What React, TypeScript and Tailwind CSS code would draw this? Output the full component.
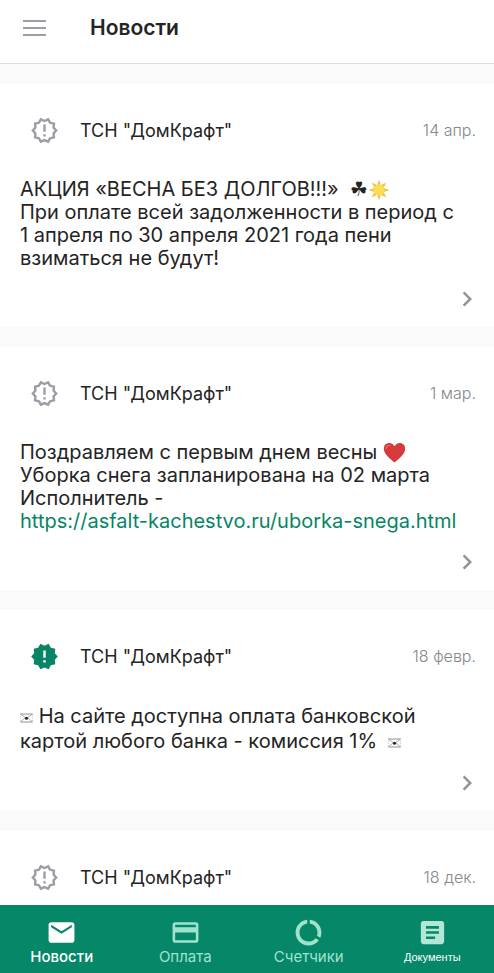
import React from 'react';
import {
    MdArticle,
    MdChevronRight,
    MdDataUsage,
    MdEmail,
    MdNewReleases,
    MdOutlineNewReleases,
    MdPayment
} from 'react-icons/md';

const SunIcon = () => (
    <svg viewBox="0 0 24 24" className="inline-block w-[22px] h-[22px] align-[-5px]" role="img" aria-label="Солнце">
        <path
            d="M12 .5l2 6.200 6-3-3 6 6.500 2.300-6.500 2.300 3 6-6-3-2 6.200-2-6.200-6 3 3-6L.5 12 7 9.700l-3-6 6 3z"
            fill="#edc044"/>
        <circle cx="12" cy="12" r="6.200" fill="#fbdc58"/>
    </svg>
);

const HeartIcon = () => (
    <svg viewBox="0 0 24 22" className="inline-block w-[23px] h-[21px] align-[-4px]" role="img" aria-label="Сердце">
        <path d="M12 21.5C8 18 .8 13 .8 7 .8 3.300 3.400 1 6.500 1 9 1 11 2.400 12 4.500 13 2.400 15 1 17.500 1c3.100 0 5.700 2.300 5.700 6 0 6-7.200 11-11.200 14.500z"
              fill="#d63a3c"/>
        <path d="M3.500 6.500C3.800 4.500 5 3.500 7 3.500" stroke="#e8696a" strokeWidth="1.500" fill="none"
              strokeLinecap="round"/>
    </svg>
);

const LetterIcon = () => (
    <svg viewBox="0 0 13 10" className="inline-block w-[13px] h-[10px]" role="img" aria-label="Письмо">
        <path d="M.5 1h12M.5 9h12" stroke="#777" strokeWidth=".8"/>
        <path d="M.5 1v8M12.500 1v8" stroke="#bbb" strokeWidth=".8" strokeDasharray="1 1"/>
        <path d="M.5 1L6.500 5.500 12.500 1M.5 9L5 5M12.500 9L8 5" stroke="#888" strokeWidth=".7" fill="none"/>
        <circle cx="6.500" cy="5.200" r="1.500" fill="#222"/>
    </svg>
);

const news = [
    {
        id: 1,
        date: '14 апр.',
        text: <>
            АКЦИЯ «ВЕСНА БЕЗ ДОЛГОВ!!!»&nbsp; <span className="font-['DejaVu_Sans']">☘</span><SunIcon/><br/>
            При оплате всей задолженности в период с<br/>
            1 апреля по 30 апреля 2021 года пени<br/>
            взиматься не будут!
        </>
    },
    {
        id: 2,
        date: '1 мар.',
        text: <>
            Поздравляем с первым днем весны <HeartIcon/><br/>
            Уборка снега запланирована на 02 марта<br/>
            Исполнитель -<br/>
            <a href="https://asfalt-kachestvo.ru/uborka-snega.html"
               className="text-[#078566]">https://asfalt-kachestvo.ru/uborka-snega.html</a>
        </>
    },
    {
        id: 3,
        date: '18 февр.',
        unread: true,
        tall: true,
        text: <>
            <LetterIcon/> На сайте доступна оплата банковской<br/>
            картой любого банка - комиссия 1%&nbsp; <LetterIcon/>
        </>
    },
    {
        id: 4,
        date: '18 дек.',
        text: null
    }
];

const tabs = [
    {title: 'Новости', Icon: MdEmail, color: 'text-white', label: 'text-[15px] font-medium'},
    {title: 'Оплата', Icon: MdPayment, color: 'text-[#a0e3cd]', label: 'text-[15px]'},
    {title: 'Счетчики', Icon: MdDataUsage, color: 'text-[#a0e3cd]', label: 'text-[15px]'},
    {title: 'Документы', Icon: MdArticle, color: 'text-[#b4e6d6]', label: "text-[11px] text-white font-['Liberation_Sans']"}
];

//@ts-ignore
const NewsCard = ({el}) => {
    return (
        <article className="shrink-0 bg-white">
            <header className="flex items-center h-[94px] pb-[2px] pl-[30px] pr-[18px]">
                {el.unread ?
                    <MdNewReleases className="w-[29px] h-[29px] text-[#078566]"/> :
                    <MdOutlineNewReleases className="w-[29px] h-[29px] text-[#9b9ea5]"/>
                }
                <h2 className="ml-[21px] text-[18px]">ТСН "ДомКрафт"</h2>
                <time className="ml-auto text-base font-light text-[#85878a]">{el.date}</time>
            </header>

            <div className={`px-5 text-[20px] whitespace-nowrap ${el.tall ? 'leading-[25px]' : 'leading-[23px]'}`}>
                {el.text}
            </div>

            <div className="flex items-center justify-end h-[57px] pr-3">
                <button type="button" aria-label="Подробнее">
                    <MdChevronRight className="w-[30px] h-[30px] text-[#929499]"/>
                </button>
            </div>
        </article>
    );
};

const App = () => {
    return (
        <div className="flex flex-col h-screen bg-[#fafafa] text-[#242424] font-[Inter,'Noto_Sans',sans-serif]">
            <header className="flex items-center shrink-0 h-16 pb-[7px] pl-[23px] bg-white border-b border-[#dedede]">
                <button type="button" aria-label="Меню" className="flex flex-col gap-[5px]">
                    <span className="w-[23px] h-[2px] bg-[#9b9ea5]"/>
                    <span className="w-[23px] h-[2px] bg-[#9b9ea5]"/>
                    <span className="w-[23px] h-[2px] bg-[#9b9ea5]"/>
                </button>
                <h1 className="ml-11 text-[21px] font-semibold">Новости</h1>
            </header>

            {/*Лента новостей*/}
            <main className="flex flex-col flex-1 gap-5 min-h-0 pt-5 overflow-hidden">
                {news.map((el) => <NewsCard key={el.id} el={el}/>)}
            </main>

            {/*Нижнее меню*/}
            <nav className="grid grid-cols-4 shrink-0 h-[68px] bg-[#058768]">
                {tabs.map(({title, Icon, color, label}) => (
                    <button key={title} type="button" className={`flex flex-col items-center pt-3 ${color}`}>
                        <Icon className="w-[31px] h-[31px]"/>
                        <span className={`leading-[18px] ${label}`}>{title}</span>
                    </button>
                ))}
            </nav>
        </div>
    );
};

export default App;
